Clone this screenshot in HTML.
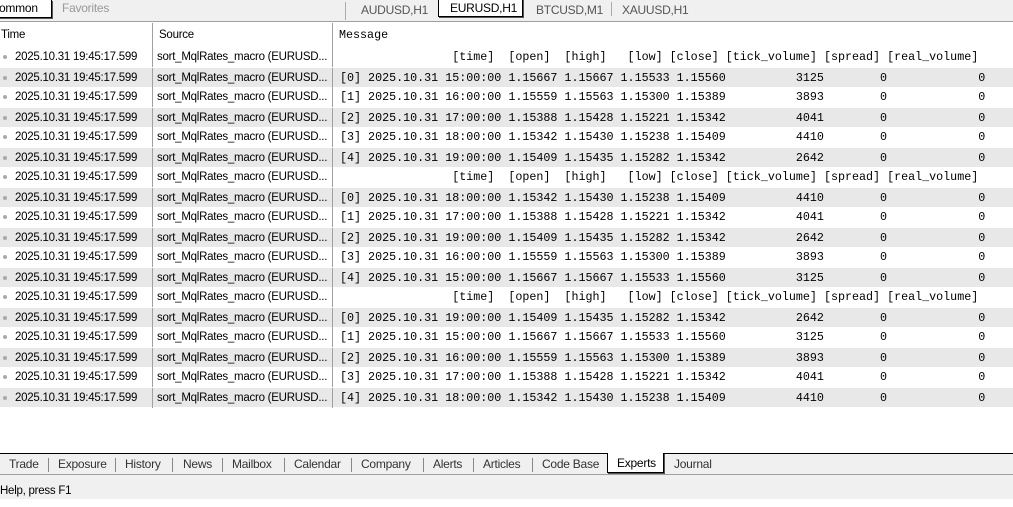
<!DOCTYPE html>
<html><head><style>
*{margin:0;padding:0;box-sizing:border-box}
body{width:1013px;height:499px;overflow:hidden;background:#fff;font-family:"Liberation Sans",sans-serif;font-size:11.5px;letter-spacing:-0.25px;color:#000;position:relative}
.top{position:absolute;left:0;top:0;width:1013px;height:22px;background:#f0f0f0;border-bottom:1px solid #a0a0a0;font-size:12px}
.t{position:absolute;top:0;height:18px;line-height:16px}
.sel{background:#fff;border:1px solid #000;border-top:none;box-shadow:1px 1px 0 #555}
.hdr{position:absolute;top:23px;height:24px;line-height:24px;left:0;width:1013px}
.hdr div,.row div{position:absolute;top:0;white-space:pre;overflow:hidden}
.row{position:absolute;left:0;width:1013px;height:20px;line-height:20px}
.g{background:#e8e8e8;border-top:1px solid #fff}
.row .c1{left:0;width:153px;border-right:1px solid #a0a0a0;height:20px;padding-left:15px}
.row .c2{left:153px;width:180px;border-right:1px solid #a0a0a0;height:20px;padding-left:4px}
.row .c3{left:333px;padding-left:7px;font-family:"Liberation Mono",monospace;font-size:11.7px;letter-spacing:0}
.dot{position:absolute;left:3px;top:8px;width:4px;height:4px;background:#aaa;border-radius:50%}
.bt{position:absolute;top:453px;left:0;width:1013px;height:21px;background:#f0f0f0;border-top:1px solid #000;font-size:12px}
.bt span{position:absolute;top:2px;line-height:16px;color:#333}
.bt i{position:absolute;top:4px;width:1px;height:14px;background:#888}
.st{position:absolute;top:474px;left:0;width:1013px;height:25px;background:#f0f0f0;border-top:1px solid #a0a0a0;line-height:32px}
</style></head><body>
<div class="top">
<div class="t sel" style="left:-5px;width:57px;padding-left:3px">ommon</div>
<div class="t" style="left:62px;color:#999">Favorites</div>
<div style="position:absolute;left:345px;top:2px;width:1px;height:18px;background:#aaa"></div>
<div class="t" style="left:361px;color:#555;top:2px">AUDUSD,H1</div>
<div class="t sel" style="left:438px;width:85px;padding-left:11px;height:18px;border-top:1px solid #000;top:-1px">EURUSD,H1</div>
<div class="t" style="left:536px;color:#555;top:2px">BTCUSD,M1</div>
<div style="position:absolute;left:611px;top:2px;width:1px;height:14px;background:#aaa"></div>
<div class="t" style="left:622px;color:#555;top:2px">XAUUSD,H1</div>
</div>
<div class="hdr">
<div style="left:0;width:153px;border-right:1px solid #a0a0a0;height:24px;padding-left:1px">Time</div>
<div style="left:153px;width:180px;border-right:1px solid #a0a0a0;height:24px;padding-left:6px">Source</div>
<div style="left:333px;padding-left:6px;font-family:'Liberation Mono',monospace;font-size:11.7px;letter-spacing:0">Message</div>
</div>
<div id="rows"></div>
<div class="bt">
<span style="left:9px">Trade</span><i style="left:48px"></i>
<span style="left:58px">Exposure</span><i style="left:115px"></i>
<span style="left:125px">History</span><i style="left:172px"></i>
<span style="left:183px">News</span><i style="left:222px"></i>
<span style="left:232px">Mailbox</span><i style="left:284px"></i>
<span style="left:294px">Calendar</span><i style="left:351px"></i>
<span style="left:361px">Company</span><i style="left:423px"></i>
<span style="left:433px">Alerts</span><i style="left:473px"></i>
<span style="left:483px">Articles</span><i style="left:532px"></i>
<span style="left:542px">Code Base</span>
<span style="left:607px;top:-1px;height:20px;width:57px;background:#fff;border:1px solid #000;border-top:none;padding-left:9px;color:#000;line-height:20px;box-shadow:1px 1px 0 #555">Experts</span>
<span style="left:674px">Journal</span>
</div>
<div class="st">Help, press F1</div>
<script>
var H="                [time]  [open]  [high]   [low] [close] [tick_volume] [spread] [real_volume]";
function d(i,t,o,h,l,c,v){return "["+i+"] 2025.10.31 "+t+" "+o+" "+h+" "+l+" "+c+"          "+v+"        0             0";}
var blocks=[
[["15:00:00","1.15667","1.15667","1.15533","1.15560","3125"],["16:00:00","1.15559","1.15563","1.15300","1.15389","3893"],["17:00:00","1.15388","1.15428","1.15221","1.15342","4041"],["18:00:00","1.15342","1.15430","1.15238","1.15409","4410"],["19:00:00","1.15409","1.15435","1.15282","1.15342","2642"]],
[["18:00:00","1.15342","1.15430","1.15238","1.15409","4410"],["17:00:00","1.15388","1.15428","1.15221","1.15342","4041"],["19:00:00","1.15409","1.15435","1.15282","1.15342","2642"],["16:00:00","1.15559","1.15563","1.15300","1.15389","3893"],["15:00:00","1.15667","1.15667","1.15533","1.15560","3125"]],
[["19:00:00","1.15409","1.15435","1.15282","1.15342","2642"],["15:00:00","1.15667","1.15667","1.15533","1.15560","3125"],["16:00:00","1.15559","1.15563","1.15300","1.15389","3893"],["17:00:00","1.15388","1.15428","1.15221","1.15342","4041"],["18:00:00","1.15342","1.15430","1.15238","1.15409","4410"]]];
var lines=[];blocks.forEach(function(b){lines.push(H);b.forEach(function(r,i){lines.push(d(i,r[0],r[1],r[2],r[3],r[4],r[5]));});});
var s="";lines.forEach(function(m,k){s+='<div class="row'+(k%2?' g':'')+'" style="top:'+(47+k*20)+'px"><span class="dot"></span><div class="c1">2025.10.31 19:45:17.599</div><div class="c2">sort_MqlRates_macro (EURUSD...</div><div class="c3">'+m+'</div></div>';});
document.getElementById("rows").innerHTML=s;
</script>
</body></html>
